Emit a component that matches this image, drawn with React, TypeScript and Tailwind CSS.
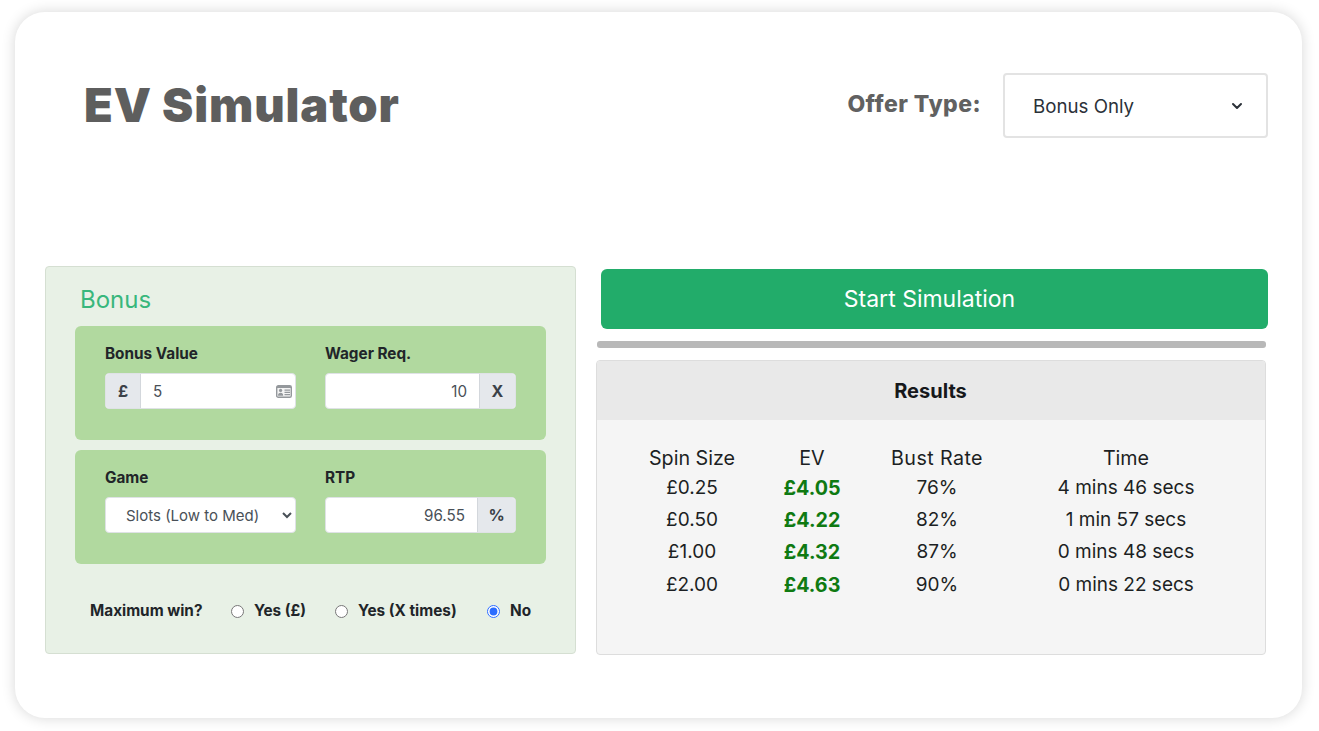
import { ChevronDown } from "lucide-react";

const rows = [
  { spin: "£0.25", ev: "£4.05", bust: "76%", time: "4 mins 46 secs", h: "h-[32px]" },
  { spin: "£0.50", ev: "£4.22", bust: "82%", time: "1 min 57 secs", h: "h-[32px]" },
  { spin: "£1.00", ev: "£4.32", bust: "87%", time: "0 mins 48 secs", h: "h-[32px]" },
  { spin: "£2.00", ev: "£4.63", bust: "90%", time: "0 mins 22 secs", h: "h-[34px]" },
];

const addon =
  "flex items-center justify-center bg-[#e5e8ec] text-[16px] font-bold text-[#3b4148]";

function Field({ label, children, className }: { label: string; children: React.ReactNode; className: string }) {
  return (
    <div className={className}>
      <div className="mb-[9px] mt-[2px] h-[21px] text-[15.3px] font-bold leading-[21px] text-[#212529]">{label}</div>
      {children}
    </div>
  );
}

function Row({ children, className }: { children: React.ReactNode; className?: string }) {
  return (
    <div className={`flex h-[36px] overflow-hidden rounded-[4px] border border-[#dfe2e6] bg-white text-[15.2px] text-[#495057] ${className ?? ""}`}>
      {children}
    </div>
  );
}

function Radio({ label, checked, className }: { label: string; checked?: boolean; className: string }) {
  return (
    <label className={`flex items-center gap-[10px] ${className}`}>
      <input type="radio" name="maxwin" defaultChecked={checked} className="m-0 h-[13px] w-[13px] accent-[#2b6cff]" />
      {label}
    </label>
  );
}

// password manager badge sitting in the bonus value input
function CardIcon() {
  return (
    <svg width="16" height="13" viewBox="0 0 16 13" className="shrink-0">
      <rect x="0.7" y="0.7" width="14.6" height="11.6" rx="1.6" fill="#f4f4f4" stroke="#94989c" strokeWidth="1.4" />
      <rect x="1" y="1" width="14" height="2" fill="#94989c" />
      <circle cx="4.6" cy="5.4" r="1.6" fill="#94989c" />
      <path d="M2 10.8c0-2.2 1-3 2.6-3s2.6.8 2.6 3z" fill="#94989c" />
      <path d="M8.5 5.2h5.5M8.5 7.4h5.5M8.5 9.6h5.5" stroke="#94989c" strokeWidth="1.2" />
    </svg>
  );
}

export default function App() {
  return (
    <div className="h-[731px] w-[1319px] overflow-hidden bg-white pl-[15px] pt-[12px] font-['Inter',sans-serif]">
      <div className="h-[706px] w-[1287px] rounded-[30px] bg-white pl-[30px] pr-[34px] shadow-[0_0_14px_rgba(0,0,0,0.16)]">
        <header className="flex h-[254px] items-start">
          <h1 className="ml-[39px] mt-[62px] text-[47px] font-black leading-[62px] tracking-[0.85px] text-[#5e5e5e]">
            EV Simulator
          </h1>
          <div className="ml-auto mt-[61px] flex items-start">
            <span className="mt-[15px] text-[23px] font-extrabold leading-[32px] tracking-[0.45px] text-[#616161]">Offer Type:</span>
            <div className="relative ml-[22px] flex h-[65px] w-[265px] items-center rounded-[4px] border-2 border-[#e3e3e3] pl-[28px] pt-[4px] text-[18.7px] text-[#2b3138]">
              Bonus Only
              <ChevronDown className="absolute right-[21px] top-[23px] h-[16px] w-[16px] text-[#2b3138]" strokeWidth={3} />
            </div>
          </div>
        </header>

        <main className="flex items-start">
          <section className="h-[388px] w-[531px] rounded-[4px] border border-[#d5dfd2] bg-[#e8f1e6] pl-[29px] pr-[29px]">
            <h2 className="ml-[5px] mt-[18px] h-[41px] text-[24px] font-normal leading-[30px] text-[#38b77c]">Bonus</h2>
            <div className="flex h-[114px] rounded-[6px] bg-[#b1d99f] pl-[30px] pt-[15px]">
              <Field label="Bonus Value" className="w-[220px]">
                <Row className="w-[191px]">
                  <span className={`${addon} w-[35px] border-r border-[#d3d7dc]`}>£</span>
                  <span className="flex flex-1 items-center justify-between pl-[12px] pr-[3px]">
                    <span className="pt-[2px]">5</span>
                    <CardIcon />
                  </span>
                </Row>
              </Field>
              <Field label="Wager Req." className="w-[191px]">
                <Row>
                  <span className="flex flex-1 items-center justify-end pr-[12px] pt-[2px]">10</span>
                  <span className={`${addon} w-[36px] border-l border-[#d3d7dc]`}>X</span>
                </Row>
              </Field>
            </div>
            <div className="mt-[10px] flex h-[114px] rounded-[6px] bg-[#b1d99f] pl-[30px] pt-[15px]">
              <Field label="Game" className="w-[220px]">
                <select className="h-[36px] w-[191px] rounded-[4px] border border-[#dfe2e6] bg-white pl-[16px] text-[15px] text-[#495057]">
                  <option>Slots (Low to Med)</option>
                </select>
              </Field>
              <Field label="RTP" className="w-[191px]">
                <Row>
                  <span className="flex flex-1 items-center justify-end pr-[12px] pt-[2px]">96.55</span>
                  <span className={`${addon} w-[38px] border-l border-[#d3d7dc]`}>%</span>
                </Row>
              </Field>
            </div>
            <div className="mt-[36px] flex h-[22px] items-center pl-[15px] text-[15.3px] font-bold text-[#212529]">
              <span className="w-[141px]">Maximum win?</span>
              <Radio label="Yes (£)" className="w-[104px]" />
              <Radio label="Yes (X times)" className="w-[152px]" />
              <Radio label="No" checked className="w-[50px]" />
            </div>
          </section>

          <section className="ml-[20px] flex-1">
            <button className="ml-[5px] mt-[3px] block h-[60px] w-[667px] rounded-[6px] bg-[#22ac6a] pr-[10px] text-[23px] leading-[60px] text-white">
              Start Simulation
            </button>
            <div className="ml-[1px] mt-[12px] h-[7px] w-[669px] rounded-[3px] bg-[#b8b8b8]" />
            <div className="mt-[12px] h-[295px] w-[670px] overflow-hidden rounded-[4px] border border-[#dddddd] bg-[#f5f5f5]">
              <div className="h-[59px] bg-[#e9e9e9] pr-[1px] text-center text-[20px] font-bold leading-[61px] text-[#16181b]">
                Results
              </div>
              <table className="ml-[25px] mt-[21px] table-fixed text-center text-[19px] leading-[24px] text-[#1c1f23]">
                <thead>
                  <tr className="h-[32px] text-[19.7px]">
                    <th className="w-[140px] pt-[1px] font-normal">Spin Size</th>
                    <th className="w-[100px] pt-[1px] font-normal">EV</th>
                    <th className="w-[150px] pt-[1px] font-normal tracking-[0.4px]">Bust Rate</th>
                    <th className="w-[228px] pt-[1px] font-normal">Time</th>
                  </tr>
                </thead>
                <tbody>
                  {rows.map((r) => (
                    <tr key={r.spin} className={r.h}>
                      <td className="pb-[2px]">{r.spin}</td>
                      <td className="pb-[3px] text-[19.7px] font-bold text-[#0f7a12]">{r.ev}</td>
                      <td className="pb-[2px]">{r.bust}</td>
                      <td className="pb-[2px]">{r.time}</td>
                    </tr>
                  ))}
                </tbody>
              </table>
            </div>
          </section>
        </main>
      </div>
    </div>
  );
}
